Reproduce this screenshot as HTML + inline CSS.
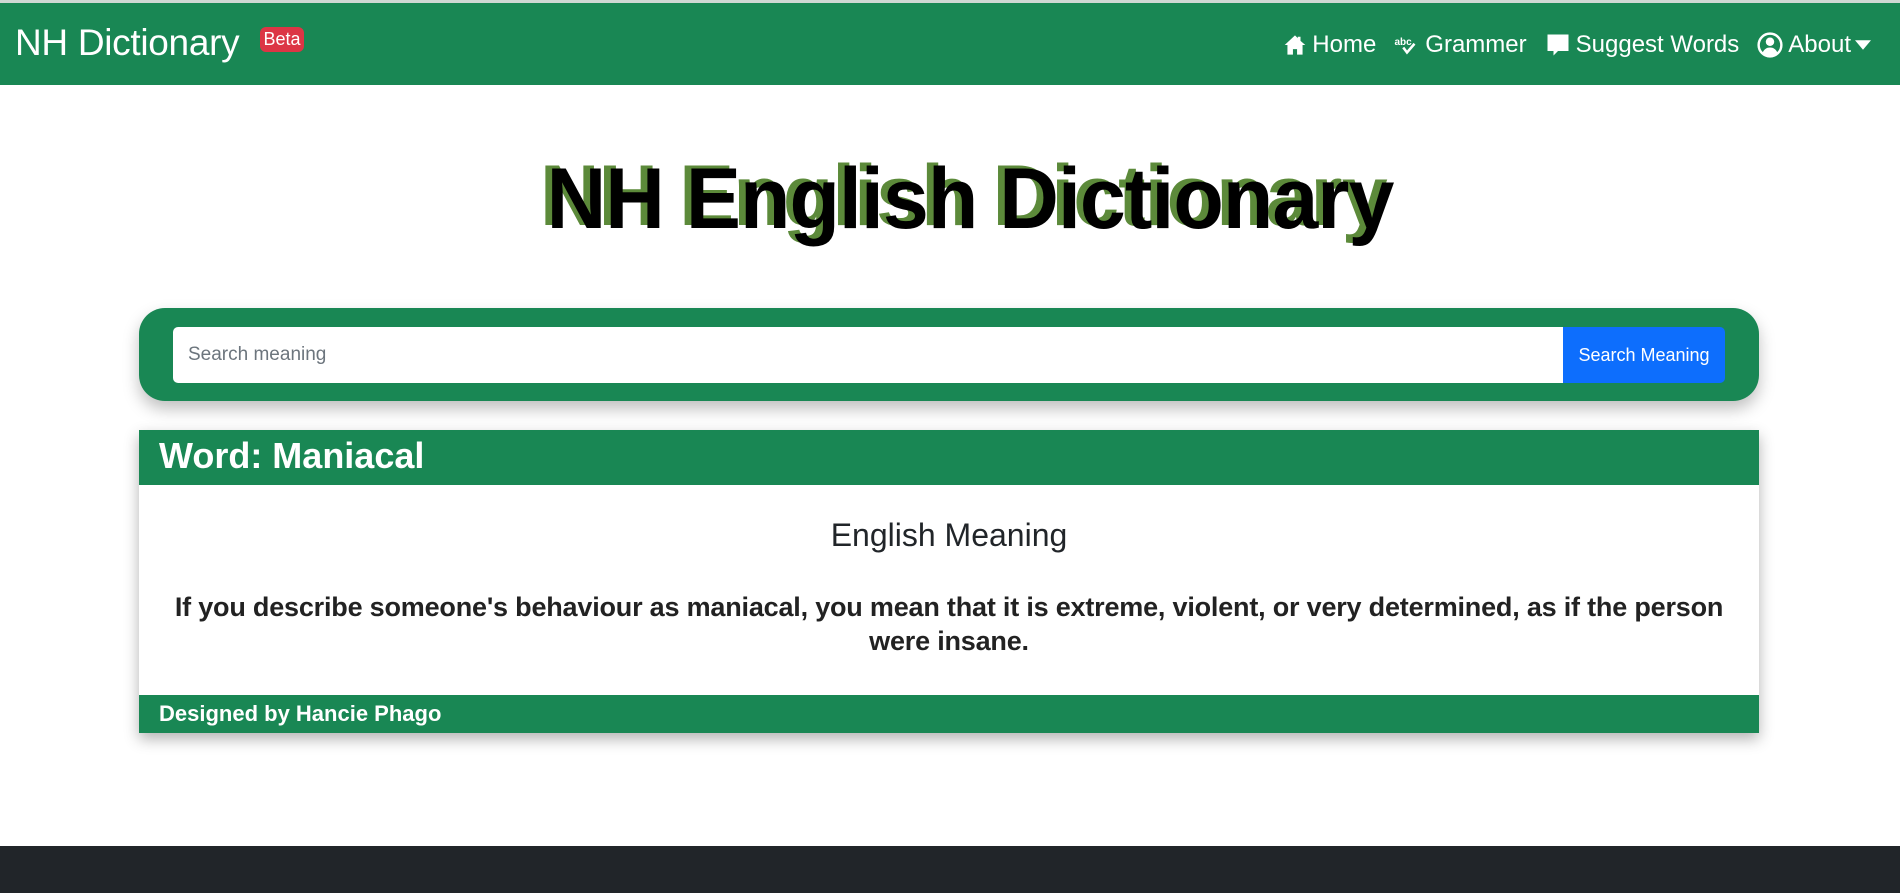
<!DOCTYPE html>
<html><head><meta charset="utf-8">
<style>
*{box-sizing:border-box;margin:0;padding:0}
body{width:1900px;height:893px;overflow:hidden;background:#fff;font-family:"Liberation Sans",sans-serif;position:relative;color:#212529}
.top{position:absolute;left:0;top:0;width:1900px;height:3px;background:#cfd8d3}
nav{position:absolute;left:0;top:3px;width:1900px;height:82px;background:#198754;color:#fff}
.brand{position:absolute;left:15px;top:19px;font-size:37px;letter-spacing:-0.3px}
.badge{position:absolute;left:260px;top:24px;width:44px;height:25px;background:#dc3545;border-radius:6px;font-size:18px;text-align:center;line-height:25px}
.links{position:absolute;right:24px;top:28px;font-size:24px;display:flex;align-items:center;white-space:nowrap}
.links span{display:flex;align-items:center;margin-left:18px}
.links svg{margin-right:5px}
h1{position:absolute;left:20px;width:1900px;top:150px;text-align:center;font-size:86px;font-weight:bold;color:#000;text-shadow:-7px -3px 0 #5c8a3a;transform:scaleX(0.96);letter-spacing:-1px}
.search{position:absolute;left:139px;top:308px;width:1620px;height:93px;background:#198754;border-radius:26px;box-shadow:0 8px 16px rgba(0,0,0,.25)}
.inp{position:absolute;left:34px;top:19px;width:1390px;height:56px;background:#fff;border-radius:5px 0 0 5px;font-size:19px;color:#6c757d;padding:17px 15px}
.btn{position:absolute;left:1424px;top:19px;width:162px;height:56px;background:#0d6efd;color:#fff;font-size:18px;text-align:center;line-height:56px;border-radius:0 5px 5px 0}
.card{position:absolute;left:139px;top:430px;width:1620px;height:303px;background:#fff;box-shadow:0 6px 14px rgba(0,0,0,.3)}
.ch{height:55px;background:#198754;color:#fff;font-size:36px;padding:5px 20px;font-weight:bold;letter-spacing:0px}
.h2{text-align:center;font-size:32px;margin-top:32px}
.p{text-align:center;font-size:27px;font-weight:bold;line-height:34px;margin-top:36px;letter-spacing:-0.2px;color:#222}
.cf{position:absolute;left:0;bottom:0;width:1620px;height:38px;background:#198754;color:#fff;font-size:22px;font-weight:bold;padding:6px 20px}
.foot{position:absolute;left:0;top:846px;width:1900px;height:47px;background:#212529}
</style></head><body>
<div class="top"></div>
<nav>
<div class="brand">NH Dictionary</div>
<div class="badge">Beta</div>
<div class="links">
<span><svg width="24" height="22" viewBox="0 0 16 16"><path fill="#fff" d="M8 1 0.5 8h2v7h4v-4h3v4h4V8h2L12 5V2h-2v1z"/></svg>Home</span>
<span><svg width="26" height="20" viewBox="0 0 20 16"><text x="0" y="8" font-size="8" fill="#fff" font-family="Liberation Sans" font-weight="bold">abc</text><path d="M7 10l3 4 6-7" stroke="#fff" stroke-width="2" fill="none"/></svg>Grammer</span>
<span><svg width="26" height="24" viewBox="0 0 16 16"><path fill="#fff" d="M1 1h14v11H8l-3 3v-3H1z"/></svg>Suggest Words</span>
<span><svg width="26" height="26" viewBox="0 0 16 16"><circle cx="8" cy="8" r="7" stroke="#fff" stroke-width="1.5" fill="none"/><circle cx="8" cy="6" r="2.6" fill="#fff"/><path fill="#fff" d="M3.5 12.5c1-2 2.5-3 4.5-3s3.5 1 4.5 3c-1.2 1.3-2.8 2-4.5 2s-3.300-.7-4.500-2z"/></svg>About<svg width="16" height="10" viewBox="0 0 10 6" style="margin-left:4px"><path fill="#fff" d="M0 0h10L5 6z"/></svg></span>
</div>
</nav>
<h1>NH English Dictionary</h1>
<div class="search"><div class="inp">Search meaning</div><div class="btn">Search Meaning</div></div>
<div class="card">
<div class="ch">Word: Maniacal</div>
<div class="h2">English Meaning</div>
<div class="p">If you describe someone's behaviour as maniacal, you mean that it is extreme, violent, or very determined, as if the person<br>were insane.</div>
<div class="cf">Designed by Hancie Phago</div>
</div>
<div class="foot"></div>
</body></html>
